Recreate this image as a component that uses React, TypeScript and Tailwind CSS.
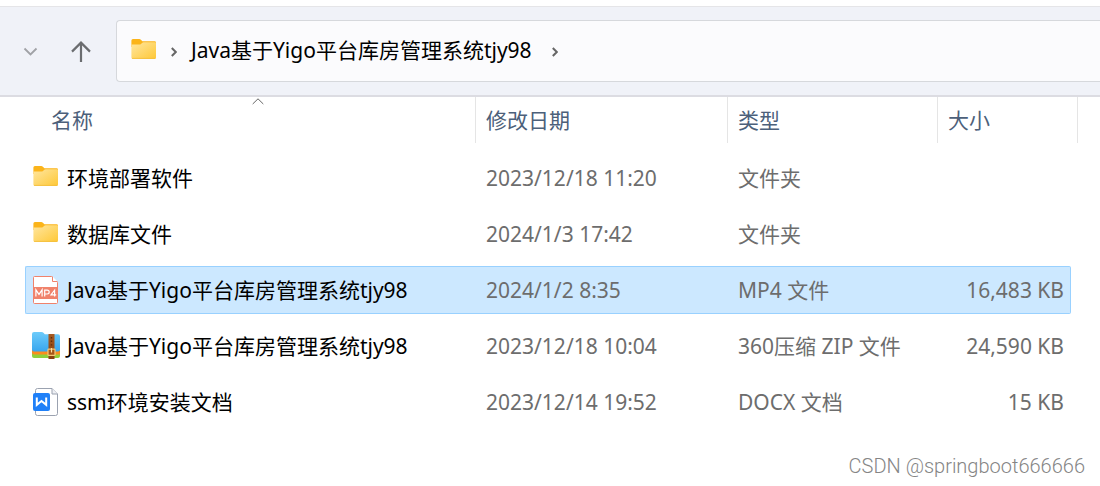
import React from 'react';

type IconProps = { className?: string };

function FolderIcon({ className = '' }: IconProps) {
  return (
    <svg className={className} width="28" height="28" viewBox="0 0 28 28" aria-hidden="true">
      <defs>
        <linearGradient id="folderFace" x1="0" y1="0" x2="1" y2="1">
          <stop offset="0" stopColor="#ffe6a0" />
          <stop offset="1" stopColor="#fec836" />
        </linearGradient>
      </defs>
      <path d="M1.4 3.5Q1.4 2 2.9 2H9.2Q10.2 2 10.9 2.7L12.4 4.3H24.6Q26 4.3 26 5.7V10H1.4Z" fill="#fbb41a" />
      <path d="M1.4 7.6H9.4Q10.3 7.6 11 7L12.3 5.8Q12.8 5.3 13.6 5.3H25Q26 5.3 26 6.3V20.6Q26 22 24.6 22H2.8Q1.4 22 1.4 20.6Z" fill="url(#folderFace)" />
      <path d="M2 21.4H25.4" stroke="#f3bd3c" strokeWidth="0.8" />
    </svg>
  );
}

function Mp4Icon() {
  return (
    <svg width="28" height="28" viewBox="0 0 28 28" aria-hidden="true">
      <path d="M2.5 0.5H19.5L25.5 6.5V26.5Q25.5 27.5 24.5 27.5H2.5Q1.5 27.5 1.5 26.5V1.5Q1.5 0.5 2.5 0.5Z" fill="#fff" stroke="#f0826b" />
      <path d="M20.5 0.5V5.5H25.5" fill="#fff" stroke="#f0826b" />
      <rect x="1" y="11" width="25" height="12" fill="#f0826b" />
      <g fill="none" stroke="#fff" strokeWidth="1.2">
        <path d="M3.9 20.6V13.8L7 18.4L10.1 13.8V20.6" />
        <path d="M12.7 20.6V14.2H15.2Q17.2 14.2 17.2 16.1T15.2 18H12.7" />
        <path d="M22.6 20.6V14.2L19 18.9H24.2" />
      </g>
    </svg>
  );
}

function ZipIcon() {
  return (
    <svg width="28" height="28" viewBox="0 0 28 28" aria-hidden="true">
      <defs>
        <linearGradient id="zipFace" x1="0" y1="0" x2="0" y2="1">
          <stop offset="0" stopColor="#6dcbfa" />
          <stop offset="1" stopColor="#38a6ef" />
        </linearGradient>
        <linearGradient id="zipBelt" x1="0" y1="0" x2="0" y2="1">
          <stop offset="0" stopColor="#a65a22" />
          <stop offset="1" stopColor="#87400f" />
        </linearGradient>
      </defs>
      <path d="M0 18H28V24Q28 26 26 26H2Q0 26 0 24Z" fill="#8fcf3c" />
      <path d="M0 16H28V22.5H2Q0 22.5 0 20.5Z" fill="#fb8c1e" />
      <path d="M0 2Q0 0 2 0H9.5Q10.8 0 11.7 1L12.8 2.2H26Q28 2.2 28 4.2V17.5Q28 19.5 26 19.5H2Q0 19.5 0 17.5Z" fill="url(#zipFace)" />
      <rect x="16.5" y="2" width="6" height="25" fill="url(#zipBelt)" />
      <path d="M19.5 5V15" stroke="#5d2c0b" strokeWidth="1.4" strokeDasharray="1.4 2.2" />
      <rect x="16" y="17.2" width="7" height="6.2" rx="0.6" fill="#a55718" stroke="#f6c877" strokeWidth="1.2" />
      <path d="M19.5 16V20.5" stroke="#ffe2a4" strokeWidth="1.2" />
    </svg>
  );
}

function DocIcon() {
  return (
    <svg width="28" height="28" viewBox="0 0 28 28" aria-hidden="true">
      <path d="M5.5 0.5H20L25.5 6V25.5Q25.5 27.5 23.5 27.5H5.5Q3.5 27.5 3.5 25.5V2.5Q3.5 0.5 5.5 0.5Z" fill="#fff" stroke="#9ba2b0" />
      <path d="M20 0.5V6H25.5" fill="#eef0f4" stroke="#9ba2b0" />
      <rect x="1" y="5" width="17" height="18" rx="2" fill="#1f80f8" />
      <path d="M4.8 9.5V16.8L9.5 13L14.2 16.8V9.5" fill="none" stroke="#fff" strokeWidth="2" />
    </svg>
  );
}

function Crumb() {
  return (
    <svg width="6" height="10" viewBox="0 0 6 10" aria-hidden="true">
      <path d="M0.8 1L4.8 5L0.8 9" fill="none" stroke="#666" strokeWidth="2" />
    </svg>
  );
}

type Row = {
  icon: () => React.ReactElement;
  name: string;
  date: string;
  type: string;
  size: string;
  selected?: boolean;
};

const rows: Row[] = [
  { icon: FolderIcon, name: '环境部署软件', date: '2023/12/18 11:20', type: '文件夹', size: '' },
  { icon: FolderIcon, name: '数据库文件', date: '2024/1/3 17:42', type: '文件夹', size: '' },
  { icon: Mp4Icon, name: 'Java基于Yigo平台库房管理系统tjy98', date: '2024/1/2 8:35', type: 'MP4 文件', size: '16,483 KB', selected: true },
  { icon: ZipIcon, name: 'Java基于Yigo平台库房管理系统tjy98', date: '2023/12/18 10:04', type: '360压缩 ZIP 文件', size: '24,590 KB' },
  { icon: DocIcon, name: 'ssm环境安装文档', date: '2023/12/14 19:52', type: 'DOCX 文档', size: '15 KB' },
];

const headCell = 'flex h-[46px] items-center border-r border-[#e5e5e5]';

export default function App() {
  return (
    <div className="flex min-h-screen flex-col bg-white pt-1.5 font-['Noto_Sans','Noto_Sans_CJK_SC',sans-serif] text-[21px] leading-7 text-black [font-kerning:none]">
      <nav className="flex items-center border-t border-b-2 border-t-[#e5e5e8] border-b-[#dcdce2] bg-[#f0f2f8] pt-[13px] pb-[13px]" aria-label="地址栏">
        <button type="button" aria-label="最近位置" className="ml-[23px] flex h-8 w-[15px] items-center justify-center">
          <svg width="15" height="9" viewBox="0 0 15 9" aria-hidden="true">
            <path d="M1.5 1.5L7.5 7.5L13.5 1.5" fill="none" stroke="#a0a2a6" strokeWidth="1.8" />
          </svg>
        </button>
        <button type="button" aria-label="向上" className="ml-8 flex h-8 w-[22px] items-center justify-center">
          <svg width="22" height="22" viewBox="0 0 22 22" aria-hidden="true">
            <path d="M11 22V2.4M2 11.6L11 2.6L20 11.6" fill="none" stroke="#6b6d70" strokeWidth="2.2" />
          </svg>
        </button>
        <div className="ml-6 flex h-[62px] flex-1 items-center rounded-l border border-r-0 border-[#d6d8dc] bg-[#fbfbfd] pl-[13px]">
          <FolderIcon />
          <span className="ml-[13px] pt-0.5"><Crumb /></span>
          <button type="button" className="mr-5 ml-[14px] pb-0.5 whitespace-nowrap">Java基于Yigo平台库房管理系统tjy98</button>
          <span className="pt-0.5"><Crumb /></span>
        </div>
      </nav>

      <main className="-mt-2 pr-[22px] pl-[25px]">
        <table className="w-full table-fixed border-separate border-spacing-x-0 border-spacing-y-2">
          <colgroup>
            <col />
            <col className="w-[252px]" />
            <col className="w-[210px]" />
            <col className="w-[133px]" />
            <col className="w-[7px]" />
          </colgroup>
          <thead className="text-left text-[#4c607a]">
            <tr>
              <th scope="col" aria-sort="ascending" className="pb-[3px] pl-4 font-normal">
                <div className={`${headCell} relative pl-2.5`}>
                  名称
                  <svg className="absolute top-px left-1/2 -translate-x-1/2" width="12" height="7" viewBox="0 0 12 7" aria-hidden="true">
                    <path d="M0.7 6L6 0.8L11.3 6" fill="none" stroke="#666" />
                  </svg>
                </div>
              </th>
              <th scope="col" className="pb-[3px] font-normal"><div className={`${headCell} pl-2.5`}>修改日期</div></th>
              <th scope="col" className="pb-[3px] font-normal"><div className={`${headCell} pl-2.5`}>类型</div></th>
              <th scope="col" colSpan={2} className="pb-[3px] font-normal"><div className={`${headCell} pl-2.5`}>大小</div></th>
            </tr>
          </thead>
          <tbody>
            {rows.map((row) => {
              const Icon = row.icon;
              const tone = row.selected ? 'border-[#99d1ff] bg-[#cce8ff]' : 'border-transparent';
              const cell = `h-12 border-y whitespace-nowrap ${tone}`;
              return (
                <tr key={row.name + row.date} aria-selected={row.selected} className="text-[#6d6d6d]">
                  <td className={`${cell} rounded-l-xs border-l pl-1.5`}>
                    <div className="flex items-center gap-[7px] text-black">
                      <Icon />
                      <span>{row.name}</span>
                    </div>
                  </td>
                  <td className={`${cell} pl-2.5`}>{row.date}</td>
                  <td className={`${cell} pl-2.5`}>{row.type}</td>
                  <td className={`${cell} rounded-r-xs border-r pr-1.5 text-right`}>{row.size}</td>
                </tr>
              );
            })}
          </tbody>
        </table>
      </main>

      <footer className="mt-auto flex justify-end pr-[15px] pb-1.5 font-['Roboto',sans-serif] text-[20px] font-light text-[#858585]">
        CSDN @springboot666666
      </footer>
    </div>
  );
}
